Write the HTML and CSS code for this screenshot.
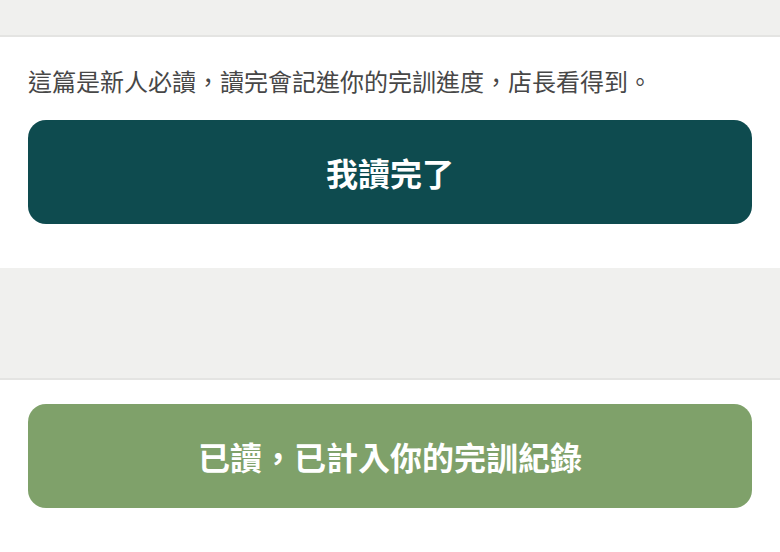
FILE: index.html
```html
<!DOCTYPE html>
<html lang="zh-Hant">
<head>
<meta charset="utf-8">
<link rel="stylesheet" href="styles.css">
</head>
<body>
<div class="band band-top"></div>
<section class="panel panel-first">
  <p class="note">這篇是新人必讀，讀完會記進你的完訓進度，店長看得到。</p>
  <button class="btn btn-primary" type="button">我讀完了</button>
</section>
<div class="band band-mid"></div>
<section class="panel panel-second">
  <button class="btn btn-done" type="button">已讀，已計入你的完訓紀錄</button>
</section>
</body>
</html>
```
FILE: styles.css
```css
html, body {
  margin: 0;
  padding: 0;
  background: #ffffff;
  font-family: "Noto Sans CJK TC", "Noto Sans", sans-serif;
}

.band {
  background: #f0f0ee;
  border-bottom: 2px solid #e4e4e2;
}

.band-top {
  height: 35px;
}

.band-mid {
  height: 110px;
}

.panel {
  padding: 0 28px;
  display: flex;
  flex-direction: column;
}

.panel-first {
  padding-top: 25px;
  padding-bottom: 44px;
}

.panel-second {
  padding-top: 24px;
  padding-bottom: 44px;
}

.note {
  margin: 0;
  font-size: 24px;
  line-height: 38px;
  color: #474747;
}

.btn {
  display: block;
  width: 100%;
  height: 104px;
  border: none;
  border-radius: 18px;
  color: #ffffff;
  font-family: "Noto Sans CJK TC", "Noto Sans", sans-serif;
  font-size: 32px;
  font-weight: 700;
  padding: 0;
  cursor: pointer;
}

.btn-primary {
  margin-top: 20px;
  background: #0e4b4f;
}

.btn-done {
  background: #7fa16a;
}
```
